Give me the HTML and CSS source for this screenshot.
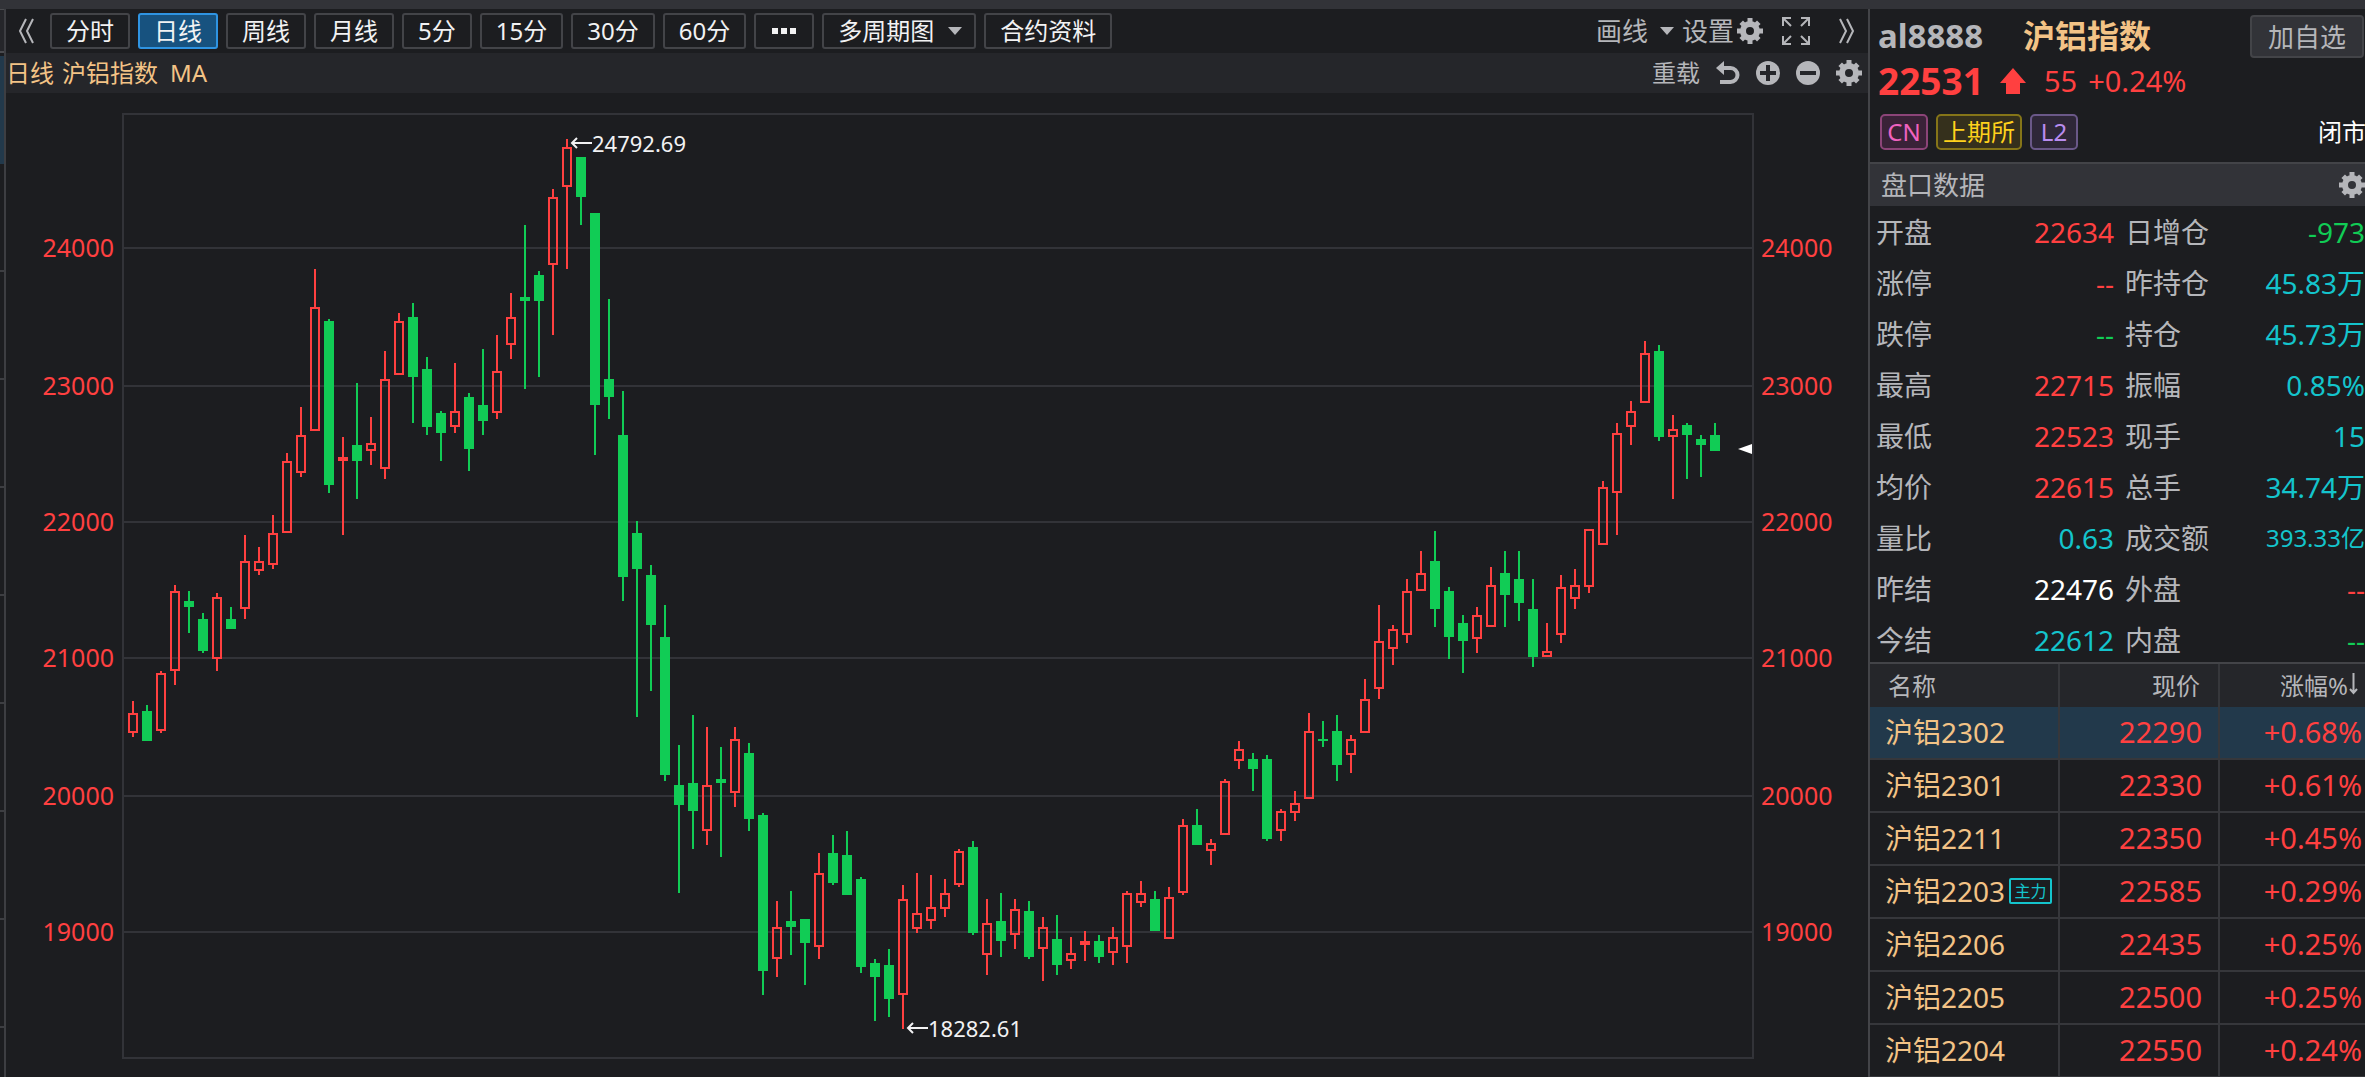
FILE: index.html
```html
<!DOCTYPE html>
<html lang="zh-CN">
<head>
<meta charset="utf-8">
<title>沪铝指数 日线</title>
<link rel="stylesheet" href="styles.css">
</head>
<body>
<svg class="defs" aria-hidden="true">
  <symbol id="gear" viewBox="-13 -13 26 26">
    <circle r="7" fill="none" stroke="currentColor" stroke-width="6"/>
    <path d="M0-13V-8M0 13V8M13 0H8M-13 0H-8M8.8-8.8 6-6M8.8 8.8 6 6M-8.8 8.8-6 6M-8.8-8.8-6-6" stroke="currentColor" stroke-width="5"/>
  </symbol>
  <symbol id="caret" viewBox="0 0 14 8"><path d="M0 0H14L7 8Z" fill="currentColor"/></symbol>
</svg>
<div class="app">
  <div class="strip"></div>
  <div class="rail">
    <div class="rail-head"></div>
    <div class="rail-active"></div>
    <div class="rail-rows"></div>
  </div>
  <main class="chart-pane">
    <nav class="toolbar">
      <button class="icon-btn collapse" aria-label="收起左侧"><svg width="16" height="26" viewBox="0 0 16 26"><path d="M8 1 2 13 8 25M15 1 9 13 15 25" fill="none" stroke="currentColor" stroke-width="2"/></svg></button>
      <div class="periods">
        <button class="tab">分时</button>
        <button class="tab active">日线</button>
        <button class="tab">周线</button>
        <button class="tab">月线</button>
        <button class="tab">5分</button>
        <button class="tab">15分</button>
        <button class="tab">30分</button>
        <button class="tab">60分</button>
        <button class="tab" aria-label="更多"><svg width="28" height="6" viewBox="0 0 28 6"><path d="M2 0h6v6h-6zM11 0h6v6h-6zM20 0h6v6h-6z" fill="currentColor"/></svg></button>
        <span class="drop boxed"><select aria-label="多周期图"><option>多周期图</option></select><svg class="caret"><use href="#caret"/></svg></span>
        <button class="tab">合约资料</button>
      </div>
      <div class="tools">
        <span class="drop plain"><select aria-label="画线"><option>画线</option></select><svg class="caret"><use href="#caret"/></svg></span>
        <button class="icon-btn settings">设置<svg class="gear"><use href="#gear"/></svg></button>
        <button class="icon-btn" aria-label="全屏"><svg width="28" height="28" viewBox="0 0 28 28" fill="none" stroke="currentColor" stroke-width="2"><path d="M1 9V1H9M1 1 9 9M19 1H27V9M27 1 19 9M1 19V27H9M1 27 9 19M19 27H27V19M27 27 19 19"/></svg></button>
        <button class="icon-btn expand" aria-label="展开右侧"><svg width="16" height="26" viewBox="0 0 16 26"><path d="M1 1 7 13 1 25M8 1 14 13 8 25" fill="none" stroke="currentColor" stroke-width="2"/></svg></button>
      </div>
    </nav>
    <div class="subbar">
      <div class="indicator"><span>日线</span><span>沪铝指数</span><span class="ma">MA</span></div>
      <div class="subtools">
        <button class="icon-btn">重载</button>
        <button class="icon-btn" aria-label="撤销"><svg width="24" height="24" viewBox="0 0 24 24"><path d="M6 7H14.500A7 7 0 0 1 14.500 21H4" fill="none" stroke="currentColor" stroke-width="4"/><path d="M0 7 8 0V14Z" fill="currentColor"/></svg></button>
        <button class="icon-btn" aria-label="放大"><svg width="24" height="24" viewBox="0 0 24 24"><circle cx="12" cy="12" r="12" fill="currentColor"/><path d="M4 12H20M12 4V20" stroke="#25262a" stroke-width="4"/></svg></button>
        <button class="icon-btn" aria-label="缩小"><svg width="24" height="24" viewBox="0 0 24 24"><circle cx="12" cy="12" r="12" fill="currentColor"/><path d="M4 12H20" stroke="#25262a" stroke-width="4"/></svg></button>
        <button class="icon-btn" aria-label="指标设置"><svg class="gear"><use href="#gear"/></svg></button>
      </div>
    </div>
    <div class="chart">
      <svg id="kline" viewBox="6 93 1862 984" role="img" aria-label="沪铝指数日K线图"></svg>
    </div>
  </main>
  <aside class="quote">
    <header class="summary">
      <div class="title-row"><span class="code">al8888</span><h1>沪铝指数</h1><button class="add">加自选</button></div>
      <div class="price-row up"><strong>22531</strong><svg width="26" height="26" viewBox="0 0 26 26"><path d="M13 0 26 15H20V26H6V15H0Z" fill="currentColor"/></svg><span class="chg">55</span><span>+0.24%</span></div>
      <div class="tag-row"><span class="tag cn">CN</span><span class="tag ex">上期所</span><span class="tag l2">L2</span><span class="status">闭市</span></div>
    </header>
    <div class="section-head"><h2>盘口数据</h2><button class="icon-btn" aria-label="盘口设置"><svg class="gear"><use href="#gear"/></svg></button></div>
    <dl class="stats">
      <div><dt>开盘</dt><dd class="up">22634</dd></div><div><dt>日增仓</dt><dd class="down">-973</dd></div>
      <div><dt>涨停</dt><dd class="up">--</dd></div><div><dt>昨持仓</dt><dd class="vol">45.83万</dd></div>
      <div><dt>跌停</dt><dd class="down">--</dd></div><div><dt>持仓</dt><dd class="vol">45.73万</dd></div>
      <div><dt>最高</dt><dd class="up">22715</dd></div><div><dt>振幅</dt><dd class="vol">0.85%</dd></div>
      <div><dt>最低</dt><dd class="up">22523</dd></div><div><dt>现手</dt><dd class="vol">15</dd></div>
      <div><dt>均价</dt><dd class="up">22615</dd></div><div><dt>总手</dt><dd class="vol">34.74万</dd></div>
      <div><dt>量比</dt><dd class="vol">0.63</dd></div><div><dt>成交额</dt><dd class="vol small">393.33亿</dd></div>
      <div><dt>昨结</dt><dd class="flat">22476</dd></div><div><dt>外盘</dt><dd class="up">--</dd></div>
      <div><dt>今结</dt><dd class="vol">22612</dd></div><div><dt>内盘</dt><dd class="down">--</dd></div>
    </dl>
    <table class="contracts">
      <colgroup><col class="c-name"><col class="c-price"><col></colgroup>
      <thead><tr><th>名称</th><th>现价</th><th>涨幅%<svg width="9" height="22" viewBox="0 0 9 22"><path d="M4.500 0V20M1 16 4.500 20 8 16" fill="none" stroke="currentColor" stroke-width="2"/></svg></th></tr></thead>
      <tbody>
        <tr class="selected"><td>沪铝2302</td><td>22290</td><td>+0.68%</td></tr>
        <tr><td>沪铝2301</td><td>22330</td><td>+0.61%</td></tr>
        <tr><td>沪铝2211</td><td>22350</td><td>+0.45%</td></tr>
        <tr><td><span class="with-mark">沪铝2203<span class="mark">主力</span></span></td><td>22585</td><td>+0.29%</td></tr>
        <tr><td>沪铝2206</td><td>22435</td><td>+0.25%</td></tr>
        <tr><td>沪铝2205</td><td>22500</td><td>+0.25%</td></tr>
        <tr><td>沪铝2204</td><td>22550</td><td>+0.24%</td></tr>
      </tbody>
    </table>
  </aside>
</div>
<script src="chart.js"></script>
</body>
</html>
```
FILE: styles.css
```css
:root {
  --bg: #1c1d20;
  --bar: #25262a;
  --panel: #323338;
  --line: #36373b;
  --text: #b5b6ba;
  --up: #ff4040;
  --down: #11cc55;
  --vol: #14c4cc;
  --name: #f3c386;
}
* { box-sizing: border-box; }
body {
  margin: 0;
  background: var(--bg);
  color: var(--text);
  font-family: "Noto Sans", "Noto Sans CJK SC", sans-serif;
  font-size: 24px;
  line-height: 36px;
  overflow: hidden;
}
h1, h2, dl, dd { margin: 0; }
button, select {
  font: inherit;
  color: inherit;
  background: none;
  border: 0;
  border-radius: 0;
  padding: 0;
  margin: 0;
  appearance: none;
  cursor: pointer;
}
svg { display: block; flex: none; }
.defs { position: absolute; width: 0; height: 0; }
.gear { width: 26px; height: 26px; }
.caret { width: 14px; height: 8px; }
.up { color: var(--up); }
.down { color: var(--down); }
.vol { color: var(--vol); }
.flat { color: #fff; }

.app {
  display: grid;
  grid-template: 9px minmax(0, 1fr) / 6px minmax(0, 1fr) 497px;
  height: 100vh;
}
.strip { grid-column: 1 / -1; background: var(--panel); }

/* Edge of the watch list, folded away on the left */
.rail { display: flex; flex-direction: column; border-right: 2px solid #3d3e42; }
.rail-head { height: 44px; background: var(--bar); border-top: 1px solid #4a4b4f; border-bottom: 2px solid #4a4b4f; }
.rail-active { height: 111px; background: #22394b; border-top: 3px solid var(--bg); }
.rail-rows { flex: 1; background: repeating-linear-gradient(transparent 0 106px, #3d3e42 106px 108px); }

.chart-pane { display: flex; flex-direction: column; min-width: 0; }
.toolbar { display: flex; align-items: center; height: 44px; padding: 0 13px 0 12px; }
.icon-btn { display: flex; align-items: center; }
.periods { display: flex; gap: 8px; margin-left: 16px; color: #f2f2f3; }
.tab, .boxed {
  height: 36px;
  border: 2px solid #434448;
  border-radius: 3px;
}
.tab { display: flex; align-items: center; padding: 0 14px; line-height: 32px; white-space: nowrap; }
.tab.active { background: #17527f; border-color: #2f94e2; }
.drop { display: grid; align-items: center; }
.drop > * { grid-area: 1 / 1; }
.drop .caret { justify-self: end; pointer-events: none; color: var(--text); }
.boxed { width: 154px; padding: 0 12px 0 14px; }
.boxed select { line-height: 32px; height: 32px; }
.plain { width: 78px; }
.tools { display: flex; align-items: center; margin-left: auto; font-size: 26px; }
.tools .settings { margin: 0 19px 0 8px; gap: 3px; }
.tools .expand { margin-left: 29px; }

.subbar { display: flex; align-items: center; justify-content: space-between; height: 40px; padding: 0 6px 0 0; background: var(--bar); }
.indicator { display: flex; gap: 8px; color: var(--name); }
.indicator .ma { margin-left: 4px; }
.subtools { display: flex; align-items: center; gap: 16px; }

.chart { flex: 1; min-height: 0; }
#kline { width: 100%; height: 100%; }
#kline text { font-size: 25px; fill: var(--up); }
#kline .end { text-anchor: end; }
#kline .peak { font-size: 22px; fill: #f2f2f3; }
#kline .arrow { fill: none; stroke: #f2f2f3; stroke-width: 2; }
#kline .grid { fill: none; stroke: #323338; stroke-width: 2; }
#kline .marker { fill: #fff; }
#kline .rise { fill: none; stroke: var(--up); stroke-width: 2; }
#kline .fall { fill: var(--down); }

.quote { border-left: 2px solid #434448; overflow: hidden; }
.summary { padding: 6px 1px 12px 8px; }
.title-row { display: flex; align-items: center; height: 43px; }
.code { width: 145px; font-size: 33px; font-weight: 700; }
h1 { font-size: 32px; font-weight: 700; color: var(--name); }
.code, h1 { padding-bottom: 2px; }
.add {
  margin-left: auto;
  width: 114px;
  height: 43px;
  font-size: 26px;
  line-height: 36px;
  background: var(--panel);
  border: 2px solid #434448;
  border-radius: 4px;
}
.price-row { display: flex; align-items: center; height: 46px; font-size: 29px; }
.price-row strong { width: 122px; font-size: 37px; }
.chg { margin: 0 11px 0 18px; }
.tag-row { display: flex; gap: 8px; margin: 10px 0 0 2px; }
.tag { min-width: 48px; height: 36px; line-height: 32px; padding: 0 5px; text-align: center; border: 2px solid; border-radius: 5px; }
.cn { color: #f062c0; background: #3a2238; border-color: #8c4478; }
.ex { color: #ffd21c; background: #35301c; border-color: #857518; }
.l2 { color: #b98cf0; background: #2e2738; border-color: #6a5888; }
.status { margin-left: auto; margin-right: -2px; color: #fff; }

.section-head {
  display: flex;
  align-items: center;
  justify-content: space-between;
  height: 44px;
  padding-left: 11px;
  background: var(--panel);
  border-top: 2px solid #434448;
}
h2 { font-size: 26px; font-weight: 400; }

.stats {
  display: grid;
  grid-template-columns: 238px 240px;
  gap: 9px 11px;
  padding: 6px 0 0 6px;
  font-size: 28px;
  line-height: 40px;
}
.stats > div { display: flex; justify-content: space-between; height: 42px; }
.small { font-size: 24px; }

.contracts { width: 100%; table-layout: fixed; border-collapse: separate; border-spacing: 0; border-top: 2px solid #434448; }
.c-name { width: 190px; }
.c-price { width: 160px; }
th, td { padding: 0 18px; border-right: 2px solid var(--line); text-align: right; white-space: nowrap; }
th { height: 43px; font-weight: 400; line-height: 36px; background: var(--bar); }
th svg { display: inline-block; margin-left: 1px; }
td { height: 53px; padding: 0 16px 2px; font-size: 29px; line-height: 42px; color: var(--up); border-bottom: 2px solid var(--line); }
th:first-child, td:first-child { text-align: left; }
td:first-child { padding-left: 15px; font-size: 28px; color: var(--name); }
th:last-child { padding-right: 7px; border-right: 0; }
td:last-child { padding-right: 3px; border-right: 0; }
.selected td { background: #22394b; }
.with-mark { display: flex; align-items: center; gap: 4px; }
.mark { flex: none; width: 43px; height: 26px; font-size: 16px; line-height: 22px; text-align: center; color: var(--vol); border: 2px solid; border-radius: 2px; }
```
FILE: chart.js
```js
// One row per day: direction, high, body top, body bottom, low (chart units, y down).
const days = `
R701,713,733,737 G705,711,741,741 R671,673,731,733 R585,591,671,685 G591,601,607,633
G613,619,651,653 R593,597,659,671 G607,619,629,629 R535,561,609,619 R547,561,571,575
R515,533,565,569 R453,461,533,533 R407,435,473,477 R269,307,431,431 G319,321,485,493
R437,457,461,535 G383,445,461,499 R417,443,451,465 R351,379,469,479 R313,321,375,375
G303,317,377,423 G357,369,427,435 G411,413,433,461 R363,411,427,433 G393,397,449,471
G349,405,421,435 R335,371,413,419 R293,317,345,359 G225,297,301,389 G271,275,301,377
R189,197,265,335 R139,147,187,269 G157,157,197,225 G213,213,405,455 G299,379,397,419
G391,435,577,601 G521,533,569,717 G565,575,625,691 G605,637,775,781 G745,785,805,893
G715,783,811,849 R727,785,831,845 G747,779,783,857 R727,739,793,807 G743,753,819,831
G813,815,971,995 R901,927,959,977 G891,921,927,955 G919,919,943,985 R853,873,947,959
G835,853,883,885 G831,855,895,895 G877,879,967,973 G959,963,977,1021 G949,965,999,1017
R885,899,995,1029 R873,913,929,933 R875,907,921,929 R879,893,909,917 R849,851,885,887
G841,847,933,935 R899,923,955,975 G893,921,941,957 R899,909,935,949 G901,911,957,959
R917,927,949,981 G915,939,965,975 R937,953,961,969 R931,941,945,961 G935,941,957,963
R927,937,953,965 R891,893,947,963 R881,893,903,907 G891,899,931,931 R887,897,939,939
R819,825,893,895 G809,825,845,845 R839,843,851,865 R779,781,835,835 R741,749,761,769
G753,759,769,791 G755,759,839,841 R809,811,831,841 R791,803,813,821 R713,731,799,799
G721,739,741,747 G715,731,765,781 R735,739,755,773 R679,699,733,733 R605,641,689,699
R625,629,649,665 R579,591,635,643 R551,573,591,591 G531,561,609,627 G587,591,637,659
G615,623,641,673 R607,615,639,653 R567,585,627,627 G551,573,595,627 G551,579,603,621
G579,609,657,667 R623,651,657,657 R575,587,635,643 R569,585,599,609 R529,529,587,593
R481,487,545,545 R423,433,493,535 R401,411,427,445 R341,353,403,403 G345,351,437,441
R415,429,437,499 G423,425,435,479 G435,439,445,477 G423,435,451,451
`.trim().split(/\s+/);

const levels = [[24000, 248], [23000, 386], [22000, 522], [21000, 658], [20000, 796], [19000, 932]];
let out = '';

for (const [price, y] of levels) {
  out += `<path class="grid" d="M123 ${y}H1753"/>`;
  out += `<text class="end" x="114" y="${y + 9}">${price}</text>`;
  out += `<text x="1761" y="${y + 9}">${price}</text>`;
}
out += '<path class="grid" d="M123 114H1753V1058H123Z"/>';

days.forEach((day, i) => {
  const x = 133 + 14 * i;
  const [high, top, bottom, low] = day.slice(1).split(',').map(Number);
  if (day[0] === 'R') {
    out += `<path class="rise" d="M${x} ${high}V${top}M${x} ${bottom}V${low}M${x - 4} ${top + 1}H${x + 4}V${bottom - 1}H${x - 4}Z"/>`;
  } else {
    out += `<path class="fall" d="M${x - 1} ${high}h2V${low}h-2ZM${x - 5} ${top}h10V${bottom}h-10Z"/>`;
  }
});

out += '<path class="arrow" d="M592 143H572M577 138 572 143 577 148"/><text class="peak" x="592" y="152">24792.69</text>';
out += '<path class="arrow" d="M928 1028H908M913 1023 908 1028 913 1033"/><text class="peak" x="928" y="1037">18282.61</text>';
out += '<path class="marker" d="M1738 449 1752 444V454Z"/>';

document.getElementById('kline').innerHTML = out;
```
